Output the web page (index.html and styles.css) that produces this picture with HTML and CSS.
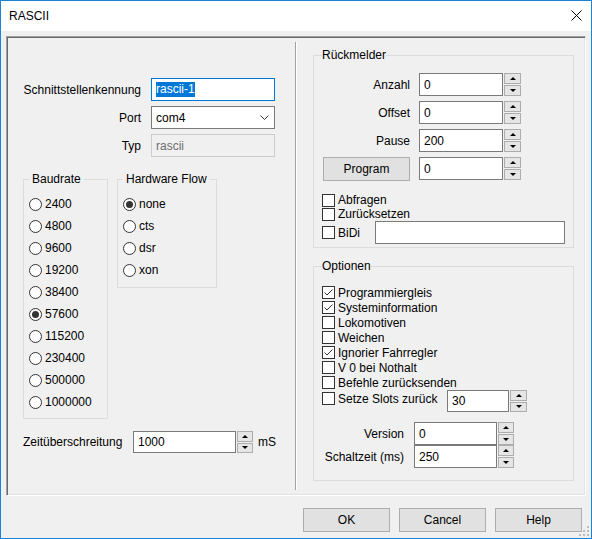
FILE: index.html
```html
<!DOCTYPE html>
<html lang="de">
<head>
    <meta charset="UTF-8">
    <title>RASCII</title>
    <link rel="stylesheet" href="styles.css">
</head>
<body>
    <div class="window">
        <div class="titlebar">
            <span class="title">RASCII</span>
            <svg class="close" width="11" height="11" viewBox="0 0 11 11">
                <path d="M0.5 0.5L10.5 10.5M10.5 0.5L0.5 10.5" stroke="#000" stroke-width="1" fill="none"/>
            </svg>
        </div>

        <div class="dialog">
            <div class="panel">
                <!-- left side: interface settings -->
                <div class="col-left">
                    <div class="id-grid">
                        <span class="lbl">Schnittstellenkennung</span>
                        <div class="field focused"><span class="sel">rascii-1</span></div>
                        <span class="lbl">Port</span>
                        <div class="field combo">
                            <span>com4</span>
                            <svg width="9" height="5" viewBox="0 0 9 5"><path d="M0.5 0.5L4.5 4.5L8.5 0.5" stroke="#333" fill="none"/></svg>
                        </div>
                        <span class="lbl">Typ</span>
                        <div class="field readonly">rascii</div>
                    </div>

                    <div class="groups">
                        <fieldset class="group baud">
                            <legend>Baudrate</legend>
                            <div class="radio"><span class="dot"></span>2400</div>
                            <div class="radio"><span class="dot"></span>4800</div>
                            <div class="radio"><span class="dot"></span>9600</div>
                            <div class="radio"><span class="dot"></span>19200</div>
                            <div class="radio"><span class="dot"></span>38400</div>
                            <div class="radio on"><span class="dot"></span>57600</div>
                            <div class="radio"><span class="dot"></span>115200</div>
                            <div class="radio"><span class="dot"></span>230400</div>
                            <div class="radio"><span class="dot"></span>500000</div>
                            <div class="radio"><span class="dot"></span>1000000</div>
                        </fieldset>
                        <fieldset class="group flow">
                            <legend>Hardware Flow</legend>
                            <div class="radio on"><span class="dot"></span>none</div>
                            <div class="radio"><span class="dot"></span>cts</div>
                            <div class="radio"><span class="dot"></span>dsr</div>
                            <div class="radio"><span class="dot"></span>xon</div>
                        </fieldset>
                    </div>

                    <div class="timeout-row">
                        <span class="timeout-lbl">Zeitüberschreitung</span>
                        <div class="field timeout-field">1000</div>
                        <div class="spin"><span class="up"></span><span class="down"></span></div>
                        <span class="unit">mS</span>
                    </div>
                </div>

                <div class="divider"></div>

                <!-- right side: feedback + options -->
                <div class="col-right">
                    <fieldset class="group side">
                        <legend>Rückmelder</legend>
                        <div class="rm-row">
                            <span class="lbl rm-lbl">Anzahl</span>
                            <div class="field rm-field">0</div>
                            <div class="spin"><span class="up"></span><span class="down"></span></div>
                        </div>
                        <div class="rm-row">
                            <span class="lbl rm-lbl">Offset</span>
                            <div class="field rm-field">0</div>
                            <div class="spin"><span class="up"></span><span class="down"></span></div>
                        </div>
                        <div class="rm-row">
                            <span class="lbl rm-lbl">Pause</span>
                            <div class="field rm-field">200</div>
                            <div class="spin"><span class="up"></span><span class="down"></span></div>
                        </div>
                        <div class="rm-row prog-row">
                            <button class="btn prog-btn">Program</button>
                            <div class="field rm-field">0</div>
                            <div class="spin"><span class="up"></span><span class="down"></span></div>
                        </div>

                        <div class="checks rm-checks">
                            <div class="check"><span class="box"></span>Abfragen</div>
                            <div class="check"><span class="box"></span>Zurücksetzen</div>
                            <div class="bidi-row">
                                <div class="check bidi-check"><span class="box"></span>BiDi</div>
                                <div class="field bidi-field"></div>
                            </div>
                        </div>
                    </fieldset>

                    <fieldset class="group side options">
                        <legend>Optionen</legend>
                        <div class="checks">
                            <div class="check on"><span class="box"><svg width="11" height="11" viewBox="0 0 11 11"><path d="M1.5 5.5L4 8L9.5 2.5" stroke="#333" fill="none"/></svg></span>Programmiergleis</div>
                            <div class="check on"><span class="box"><svg width="11" height="11" viewBox="0 0 11 11"><path d="M1.5 5.5L4 8L9.5 2.5" stroke="#333" fill="none"/></svg></span>Systeminformation</div>
                            <div class="check"><span class="box"></span>Lokomotiven</div>
                            <div class="check"><span class="box"></span>Weichen</div>
                            <div class="check on"><span class="box"><svg width="11" height="11" viewBox="0 0 11 11"><path d="M1.5 5.5L4 8L9.5 2.5" stroke="#333" fill="none"/></svg></span>Ignorier Fahrregler</div>
                            <div class="check"><span class="box"></span>V 0 bei Nothalt</div>
                            <div class="check"><span class="box"></span>Befehle zurücksenden</div>
                        </div>
                        <div class="slots-row">
                            <div class="check slots-check"><span class="box"></span>Setze Slots zurück</div>
                            <div class="field slots-field">30</div>
                            <div class="spin"><span class="up"></span><span class="down"></span></div>
                        </div>
                        <div class="ver-block">
                            <div class="ver-row">
                                <span class="lbl ver-lbl">Version</span>
                                <div class="field ver-field">0</div>
                                <div class="spin"><span class="up"></span><span class="down"></span></div>
                            </div>
                            <div class="ver-row">
                                <span class="lbl ver-lbl">Schaltzeit (ms)</span>
                                <div class="field ver-field">250</div>
                                <div class="spin"><span class="up"></span><span class="down"></span></div>
                            </div>
                        </div>
                    </fieldset>
                </div>
            </div>

            <div class="buttons">
                <button class="btn">OK</button>
                <button class="btn">Cancel</button>
                <button class="btn">Help</button>
            </div>

            <svg class="grip" width="10" height="10" viewBox="0 0 10 10">
                <rect x="8" y="0" width="2" height="2" fill="#bdbdbd"/>
                <rect x="4" y="4" width="2" height="2" fill="#bdbdbd"/>
                <rect x="8" y="4" width="2" height="2" fill="#bdbdbd"/>
                <rect x="0" y="8" width="2" height="2" fill="#bdbdbd"/>
                <rect x="4" y="8" width="2" height="2" fill="#bdbdbd"/>
                <rect x="8" y="8" width="2" height="2" fill="#bdbdbd"/>
            </svg>
        </div>
    </div>
</body>
</html>
```

FILE: styles.css
```css
* {
    margin: 0;
    padding: 0;
    box-sizing: border-box;
}

body {
    font-family: 'Liberation Sans', Arial, sans-serif;
    font-size: 12px;
    line-height: 16px;
    color: #000;
    background-color: #f0f0f0;
}

.window {
    width: 592px;
    height: 539px;
    border: 1px solid #1883d7;
    background-color: #f0f0f0;
}

.titlebar {
    height: 30px;
    background-color: #fff;
    display: flex;
    align-items: center;
    justify-content: space-between;
    padding: 0 9px 0 8px;
}

.close {
    margin-top: -1px;
}

.dialog {
    position: relative;
    height: 507px;
    padding: 5px 0 0 5px;
}

/* sunken frame around both columns */
.panel {
    width: 580px;
    height: 460px;
    display: flex;
    border: 1px solid;
    border-color: #a0a0a0 #fff #fff #a0a0a0;
    box-shadow: inset 1px 1px #696969, inset -1px -1px #e3e3e3;
}

.col-left {
    width: 288px;
    padding: 41px 0 0 16px;
}

.divider {
    width: 2px;
    margin: 5px 0 5px 0;
    border-left: 1px solid #a0a0a0;
    background-color: #fff;
}

.col-right {
    width: 288px;
    padding: 10px 0 0 16px;
}

.lbl {
    display: flex;
    align-items: center;
    justify-content: flex-end;
    white-space: nowrap;
}

.field {
    height: 23px;
    background-color: #fff;
    border: 1px solid #7a7a7a;
    padding-left: 4px;
    display: flex;
    align-items: center;
    white-space: nowrap;
}

.field.focused {
    border-color: #0078d7;
}

.sel {
    background-color: #0078d7;
    color: #fff;
    line-height: 15px;
}

.field.combo {
    justify-content: space-between;
    padding-right: 5px;
}

.field.readonly {
    background-color: #f0f0f0;
    border-color: #cccccc;
    color: #6d6d6d;
}

.id-grid {
    display: grid;
    grid-template-columns: 118px 124px;
    grid-auto-rows: 23px;
    column-gap: 10px;
    row-gap: 5px;
}

/* group boxes */
.groups {
    display: flex;
    align-items: flex-start;
    gap: 9px;
    margin-top: 14px;
}

.group {
    border: 1px solid #dcdcdc;
    min-width: 0;
}

.group legend {
    line-height: 16px;
    padding: 0 3px;
}

.baud {
    width: 85px;
    padding: 6px 0 5px 5px;
}

.flow {
    width: 100px;
    padding: 6px 0 6px 5px;
}

.radio {
    height: 22px;
    display: flex;
    align-items: center;
}

.dot {
    width: 13px;
    height: 13px;
    border: 1px solid #333;
    border-radius: 50%;
    background-color: #fff;
    margin-right: 3px;
    display: flex;
    align-items: center;
    justify-content: center;
}

.radio.on .dot::after {
    content: '';
    width: 7px;
    height: 7px;
    border-radius: 50%;
    background-color: #333;
}

.timeout-row {
    display: flex;
    align-items: center;
    height: 22px;
    margin-top: 12px;
}

.timeout-lbl {
    width: 110px;
}

.timeout-field {
    width: 103px;
    height: 22px;
}

.timeout-row .spin {
    width: 16px;
    height: 22px;
}

.unit {
    margin-left: 5px;
}

/* spinner buttons */
.spin {
    width: 17px;
    height: 23px;
    margin-left: 1px;
    display: flex;
    flex-direction: column;
    gap: 1px;
}

.spin span {
    flex: 1;
    border: 1px solid #adadad;
    background-color: #e5e5e5;
    display: flex;
    align-items: center;
    justify-content: center;
}

.spin .up::before {
    content: '';
    border-left: 3px solid transparent;
    border-right: 3px solid transparent;
    border-bottom: 3px solid #000;
}

.spin .down::before {
    content: '';
    border-left: 3px solid transparent;
    border-right: 3px solid transparent;
    border-top: 3px solid #000;
}

/* right column */
.side {
    width: 261px;
    padding: 10px 0 3px 8px;
}

.side legend {
    padding: 0;
}

.rm-row {
    display: flex;
    height: 23px;
    margin-bottom: 5px;
}

.rm-lbl {
    width: 88px;
    margin-right: 9px;
}

.rm-field {
    width: 84px;
}

.prog-row {
    height: 24px;
    margin-top: 1px;
    margin-bottom: 0;
}

.btn {
    width: 87px;
    height: 24px;
    background-color: #e1e1e1;
    border: 1px solid #adadad;
    font-family: inherit;
    font-size: 12px;
    color: #000;
}

.prog-btn {
    margin-left: 1px;
    margin-right: 9px;
}

.rm-checks {
    margin-top: 12px;
}

.check {
    height: 15px;
    display: flex;
    align-items: center;
    white-space: nowrap;
}

.rm-checks .check {
    height: 14px;
}

.box {
    width: 13px;
    height: 13px;
    border: 1px solid #333;
    background-color: #fff;
    margin-right: 3px;
    flex-shrink: 0;
}

.box svg {
    display: block;
}

.bidi-row {
    display: flex;
    align-items: center;
    height: 23px;
}

.rm-checks .bidi-check {
    width: 53px;
}

.bidi-field {
    width: 190px;
}

.options {
    margin-top: 10px;
    padding: 11px 0 12px 8px;
}

.slots-row {
    display: flex;
    align-items: flex-start;
    height: 22px;
}

.slots-check {
    width: 125px;
    margin-top: 1px;
}

.slots-field {
    width: 62px;
    height: 22px;
}

.slots-row .spin {
    height: 22px;
}

.ver-block {
    margin-top: 10px;
}

.ver-row {
    display: flex;
    height: 23px;
}

.ver-lbl {
    width: 82px;
    margin-right: 10px;
}

.ver-field {
    width: 83px;
}

.ver-row .spin {
    width: 16px;
}

/* dialog buttons */
.buttons {
    display: flex;
    justify-content: flex-end;
    gap: 9px;
    margin-top: 12px;
    padding-right: 9px;
}

.grip {
    position: absolute;
    right: 2px;
    bottom: 2px;
}
```
